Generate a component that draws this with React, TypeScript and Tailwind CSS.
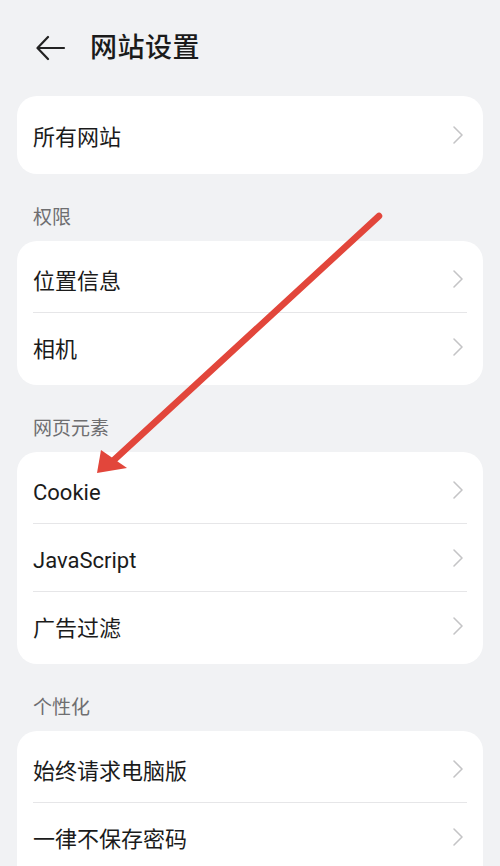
import { ReactNode } from "react";

const font = { fontFamily: 'Roboto, "Noto Sans CJK SC", sans-serif' };

const Chevron = () => (
	<svg width="12" height="20" viewBox="0 0 12 20" fill="none" className="shrink-0">
		<path d="M2 2 L10 10 L2 18" stroke="#c4c4c6" strokeWidth="1.6" strokeLinecap="round" strokeLinejoin="round" />
	</svg>
);

const Row = ({ label, last }: { label: string; last?: boolean }) => (
	<div className="relative flex items-center justify-between h-[68px] pl-4 pr-[19px]">
		<span className="pt-[4px] text-[22px] text-[#1b1b1b]">{label}</span>
		<Chevron />
		{!last && <div className="absolute left-4 right-4 bottom-0 h-px bg-[#e6e6e8]" />}
	</div>
);

const Card = ({ children, first }: { children: ReactNode; first?: boolean }) => (
	<div className={`mx-[17px] rounded-[20px] bg-white ${first ? "py-[5px]" : "py-[4px]"}`}>{children}</div>
);

const Label = ({ children }: { children: ReactNode }) => (
	<div className="pt-[32px] pb-[11px] px-[33px] h-[67px]">
		<span className="block text-[19px] leading-6 text-[#6e6e70]">{children}</span>
	</div>
);

const App = () => {
	return (
		<main className="relative w-[500px] h-[866px] overflow-hidden bg-[#f1f2f4]" style={font}>
			{/* header */}
			<div className="flex items-center h-[96px] pl-[36px]">
				<svg width="30" height="26" viewBox="0 0 30 26" fill="none">
					<path d="M28 13 H2 M12 2 L1.5 13 L12 24" stroke="#222" strokeWidth="2.2" strokeLinecap="round" strokeLinejoin="round" />
				</svg>
				<h1 className="ml-[24px] text-[27px] font-medium text-[#1b1b1b] tracking-[0.5px]">网站设置</h1>
			</div>

			<Card first>
				<Row label="所有网站" last />
			</Card>

			<Label>权限</Label>
			<Card>
				<Row label="位置信息" />
				<Row label="相机" last />
			</Card>

			<Label>网页元素</Label>
			<Card>
				<Row label="Cookie" />
				<Row label="JavaScript" />
				<Row label="广告过滤" last />
			</Card>

			<Label>个性化</Label>
			<Card>
				<Row label="始终请求电脑版" />
				<Row label="一律不保存密码" />
				<div className="h-[40px]" />
			</Card>

			{/* annotation arrow */}
			<svg className="absolute inset-0 pointer-events-none" width="500" height="866" viewBox="0 0 500 866">
				<line x1="379" y1="216" x2="114" y2="460" stroke="#e2463b" strokeWidth="6.5" strokeLinecap="round" />
				<polygon points="97,473 101,450 127,468" fill="#e2463b" />
			</svg>
		</main>
	);
};

export default App;
